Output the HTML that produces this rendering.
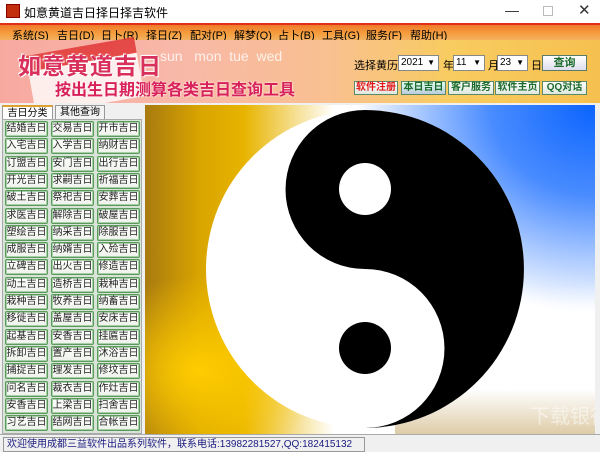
<!DOCTYPE html>
<html><head><meta charset="utf-8"><style>
*{margin:0;padding:0;box-sizing:border-box}
body{width:600px;height:452px;overflow:hidden;background:#f0f0f0;font-family:"Liberation Sans","Noto Sans CJK SC",sans-serif;position:relative}
.abs{position:absolute}
#title{left:0;top:0;width:600px;height:23px;background:#fff;font-size:12px;color:#000}
#menu{left:0;top:23px;width:600px;height:17px;background:linear-gradient(#f07a2a,#f5a040 60%,#f3b060);border-top:2px solid #e03018}
#menu span{position:absolute;top:2px;font-size:11px;color:#000}
#banner{left:0;top:40px;width:600px;height:63px;background:linear-gradient(90deg,#f7a9a0 0%,#f8b8a8 30%,#f9c090 55%,#f8cc60 75%,#f6c050 100%)}
.sel{position:absolute;height:16px;background:#fff;border:1px solid #888;font-size:10px;padding-left:2px;line-height:14px}
.sel:after{content:"▼";position:absolute;right:3px;top:0;font-size:8px}
.b2{position:absolute;top:81px;height:14px;border:1px solid #5a8a6a;background:linear-gradient(#fff,#dfe8df);font-size:10px;font-weight:bold;text-align:center;line-height:12px;color:#1a6a2a;white-space:nowrap}
#left{left:0;top:103px;width:144px;height:331px;background:#f0f0f0}
.tab{position:absolute;top:2px;height:14px;font-size:10px;line-height:13px;text-align:center;border:1px solid #999;border-bottom:none;background:#f3f3f3}
.btn{position:absolute;width:43px;height:16px;border:1px solid #5a9a5a;box-shadow:inset 0 0 0 1px #a8d0a8;border-radius:2px;background:linear-gradient(#fff,#eef2ea);font-size:10px;line-height:14px;text-align:center;color:#222;white-space:nowrap;overflow:hidden}
#img{left:145px;top:105px;width:450px;height:329px;overflow:hidden;
background:radial-gradient(ellipse 300px 260px at 100% 0%,#0a64ff 0%,#4a8cff 35%,rgba(255,255,255,0) 80%),linear-gradient(90deg,#a87a10 0%,#d8a400 12%,#e8b400 22%,#fff 42%,#fff 100%)}
#status{left:0;top:434px;width:600px;height:18px;background:#f0f0f0;border-top:1px solid #aaa}
</style></head><body>
<div id="title" class="abs">
 <div class="abs" style="left:6px;top:4px;width:14px;height:14px;background:#c23010;border:1px solid #800"></div>
 <div class="abs" style="left:24px;top:4px">如意黄道吉日择日择吉软件</div>
 <div class="abs" style="left:505px;top:2px;font-size:14px;color:#333">—</div>
 <div class="abs" style="left:543px;top:6px;width:10px;height:10px;border:1px solid #bbb"></div>
 <div class="abs" style="left:578px;top:1px;font-size:15px;color:#333">✕</div>
</div>
<div id="menu" class="abs">
 <span style="left:12px">系统(S)</span><span style="left:57px">吉日(D)</span><span style="left:101px">日卜(R)</span><span style="left:146px">择日(Z)</span><span style="left:190px">配对(P)</span><span style="left:234px">解梦(Q)</span><span style="left:278px">占卜(B)</span><span style="left:322px">工具(G)</span><span style="left:366px">服务(F)</span><span style="left:410px">帮助(H)</span>
</div>
<div id="banner" class="abs">
 <div class="abs" style="left:30px;top:6px;width:110px;height:60px;background:#fff;transform:rotate(-10deg);opacity:.8;border-top:16px solid #e03030"></div>
 <div class="abs" style="left:160px;top:8px;font-size:14px;color:#fff;opacity:.8">sun &nbsp; mon &nbsp;tue &nbsp;wed</div>
 <div class="abs" style="left:18px;top:7px;font-size:23px;font-weight:bold;color:#d8305a;letter-spacing:1px;text-shadow:0 0 2px #fff,1px 1px 0 #fff,-1px -1px 0 #fff">如意黄道吉日</div>
 <div class="abs" style="left:55px;top:36px;font-size:16px;font-weight:bold;color:#d8205a;text-shadow:0 0 2px #fff">按出生日期测算各类吉日查询工具</div>
 <div class="abs" style="left:354px;top:17px;font-size:11px">选择黄历:</div>
 <div class="sel" style="left:398px;top:15px;width:41px">2021</div>
 <div class="abs" style="left:443px;top:17px;font-size:11px">年</div>
 <div class="sel" style="left:453px;top:15px;width:32px">11</div>
 <div class="abs" style="left:488px;top:17px;font-size:11px">月</div>
 <div class="sel" style="left:497px;top:15px;width:31px">23</div>
 <div class="abs" style="left:531px;top:17px;font-size:11px">日</div>
 <div class="abs" style="left:542px;top:15px;width:45px;height:16px;border:1px solid #5a7a6a;background:linear-gradient(#fff,#dde);font-size:11px;font-weight:bold;color:#1a6a2a;text-align:center;line-height:14px">查询</div>
</div>
<div class="b2" style="left:354px;width:44px;color:#e01818">软件注册</div>
<div class="b2" style="left:401px;width:45px;background:linear-gradient(#dfe,#bcd)">本日吉日</div>
<div class="b2" style="left:448px;width:46px">客户服务</div>
<div class="b2" style="left:495px;width:45px">软件主页</div>
<div class="b2" style="left:542px;width:45px">QQ对话</div>
<div id="left" class="abs">
 <div class="tab" style="left:2px;width:51px;background:#fff;border-top:2px solid #e0a030">吉日分类</div>
 <div class="tab" style="left:55px;width:50px">其他查询</div>
 <div class="abs" style="left:2px;top:16px;width:140px;height:315px;background:#d8e4d8;border:1px solid #aaa"></div>
</div>
<div id="btns"></div>
<div id="img" class="abs">
 <div class="abs" style="left:250px;top:180px;width:200px;height:149px;background:linear-gradient(180deg,rgba(255,255,255,0) 0%,#fff 40%,#fff 70%,rgba(200,170,110,.6) 100%)"></div>
 <div class="abs" style="left:0;top:170px;width:180px;height:160px;background:radial-gradient(ellipse at 30% 60%,#ffcc00,rgba(255,204,0,0) 70%)"></div>
 <svg class="abs" style="left:0;top:0" width="450" height="329">
  <g transform="translate(220,164)">
   <circle r="159" fill="#fff"/>
   <path d="M0,-159 A159,159 0 0 1 0,159 A79.5,79.5 0 0 0 0,0 A79.5,79.5 0 0 1 0,-159Z" fill="#000"/>
   <circle cy="-80" r="26" fill="#fff"/>
   <circle cy="79" r="26" fill="#000"/>
  </g>
  <text x="385" y="318" font-size="20" fill="#fff" opacity=".5" font-family="Noto Sans CJK SC">下载银行</text>
 </svg>
</div>
<div id="status" class="abs">
 <div class="abs" style="left:3px;top:2px;height:15px;border:1px solid #999;font-size:10px;color:#1a1a80;line-height:13px;padding-left:3px;white-space:nowrap;width:362px">欢迎使用成都三益软件出品系列软件，联系电话:13982281527,QQ:182415132</div>
</div>
<script>
var n=["结婚","交易","开市","入宅","入学","纳财","订盟","安门","出行","开光","求嗣","祈福","破土","祭祀","安葬","求医","解除","破屋","塑绘","纳采","除服","成服","纳婿","入殓","立碑","出火","修造","动土","造桥","栽种","栽种","牧养","纳畜","移徙","盖屋","安床","起基","安香","挂匾","拆卸","置产","沐浴","捕捉","理发","修坟","问名","裁衣","作灶","安香","上梁","扫舍","习艺","结网","合帐"];
var h="";for(var i=0;i<n.length;i++){var r=Math.floor(i/3),c=i%3;h+='<div class="btn" style="left:'+(5+c*46)+'px;top:'+(121+r*17.3)+'px">'+n[i]+'吉日</div>';}
document.getElementById("btns").innerHTML=h;
</script>
</body></html>
